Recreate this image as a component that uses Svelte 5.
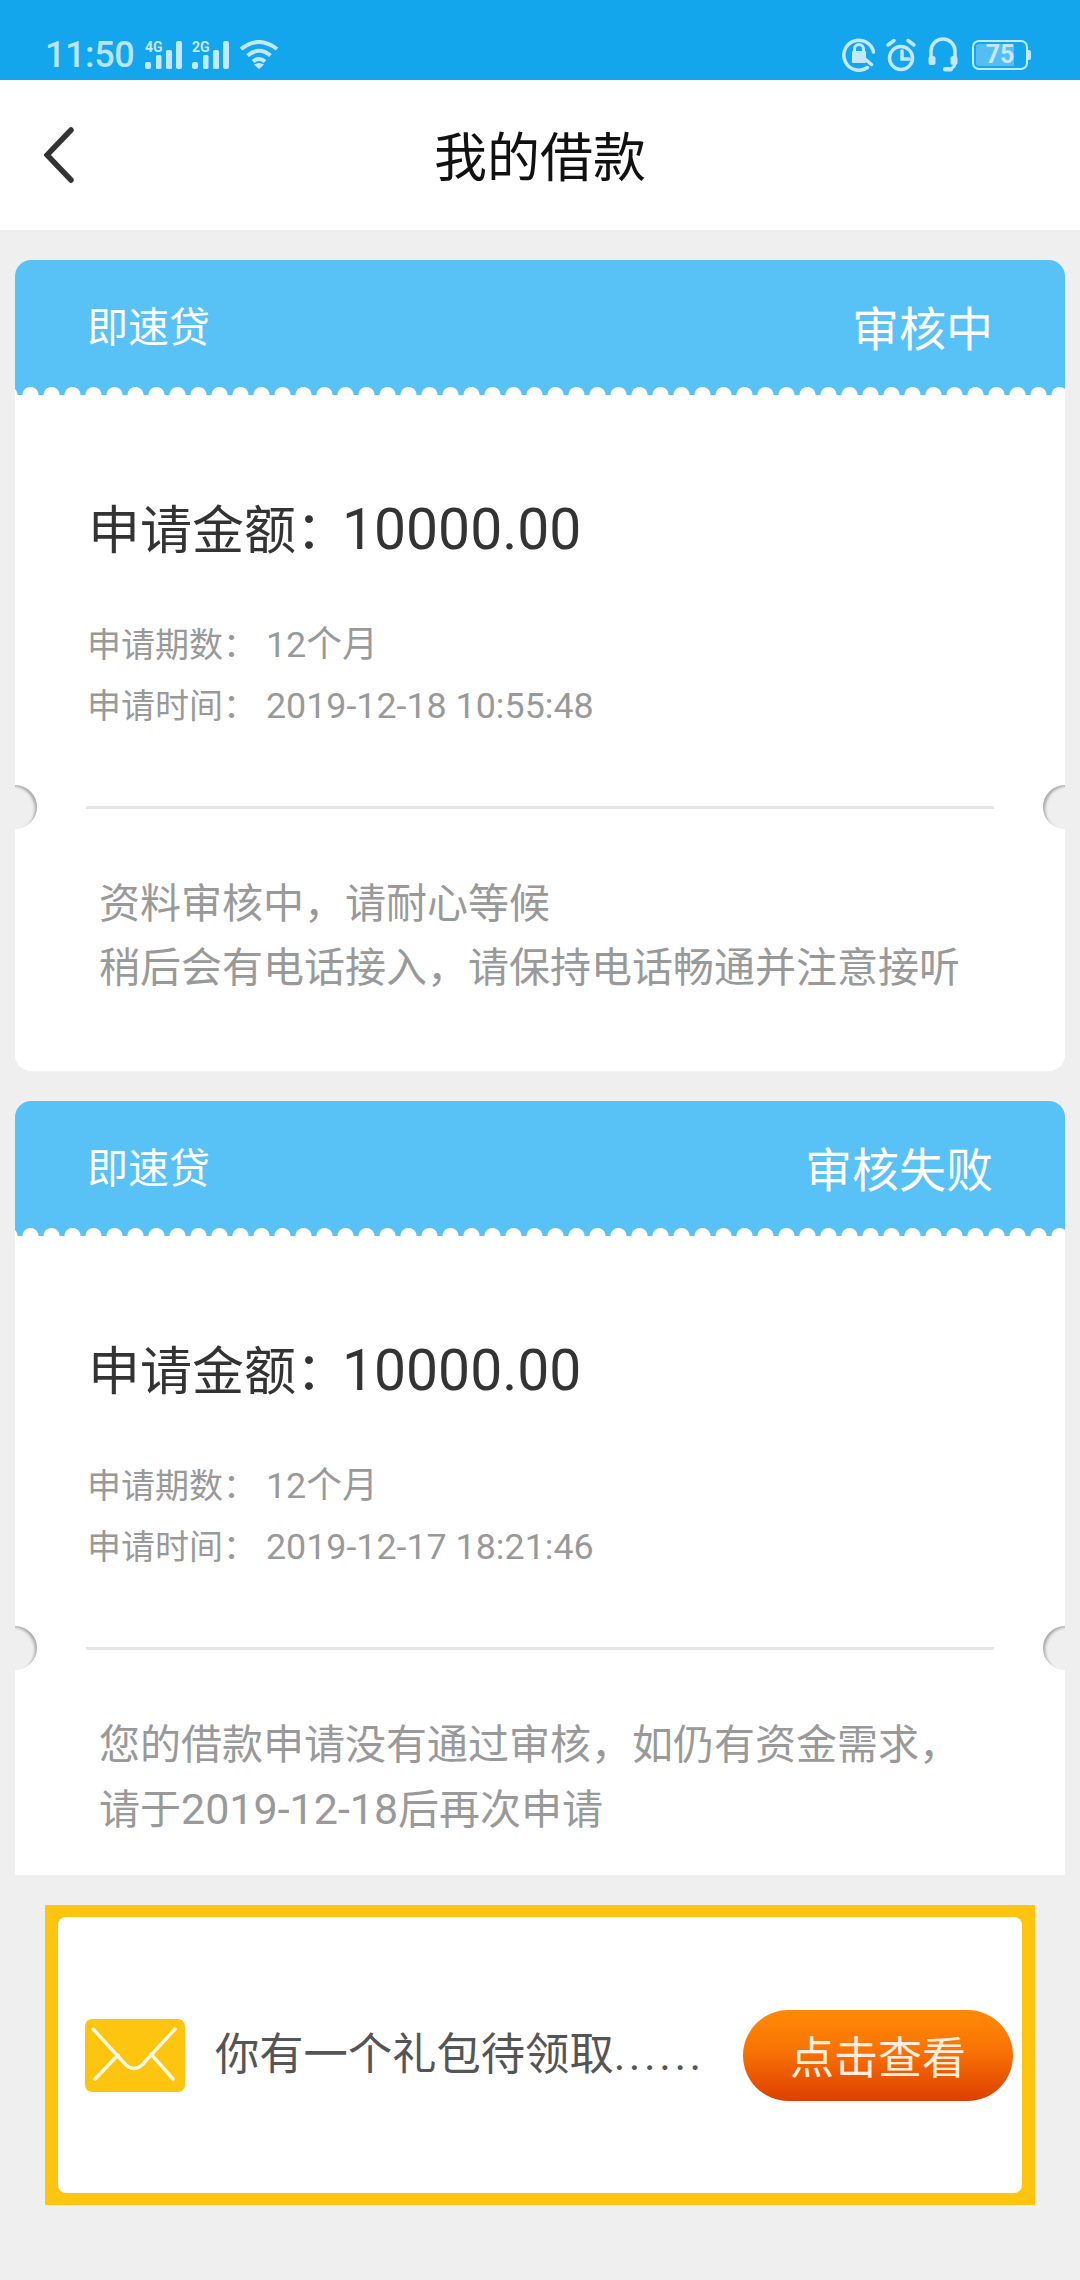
<script>
  const loans = [
    { status: '审核中', date: '2019-12-18 10:55:48', notes: [{ pre: '资料审核中，请耐心等候' }, { pre: '稍后会有电话接入，请保持电话畅通并注意接听' }], clipped: false },
    { status: '审核失败', date: '2019-12-17 18:21:46', notes: [{ pre: '您的借款申请没有通过审核，如仍有资金需求，' }, { pre: '请于', num: '2019-12-18', post: '后再次申请' }], clipped: true }
  ];
</script>

<div class="page">
  <div class="status">
    <div class="status-left">
      <span class="time">11:50</span>
      <svg class="sig" viewBox="0 0 37 30" width="37" height="30">
        <text x="0" y="12" class="net">4G</text>
        <rect x="0" y="22" width="6" height="7" rx="2" /><rect x="11" y="15" width="5.500" height="14" rx="1.500" />
        <rect x="21" y="10" width="6" height="19" rx="1.500" /><rect x="31" y="1" width="6" height="28" rx="2" />
      </svg>
      <svg class="sig" viewBox="0 0 37 30" width="37" height="30">
        <text x="0" y="12" class="net">2G</text>
        <rect x="0" y="22" width="6" height="7" rx="2" /><rect x="11" y="15" width="5.500" height="14" rx="1.500" />
        <rect x="21" y="10" width="6" height="19" rx="1.500" /><rect x="31" y="1" width="6" height="28" rx="2" />
      </svg>
      <svg class="wifi" viewBox="0 0 40 30" width="40" height="30">
        <path d="M2 9 Q20 -5 38 9" /><path d="M8.500 15.500 Q20 6 31.500 15.500" /><path d="M14 21.500 Q20 16.500 26 21.500" />
        <path class="solid" d="M15 24.500 Q20 21.500 25 24.500 L20 29 Z" />
      </svg>
    </div>
    <div class="status-right">
      <svg class="ico" viewBox="0 0 33 34" width="33" height="34">
        <path d="M31.500 14 A15 15 0 1 0 25.500 29.500" class="ln" />
        <path d="M23 21 L29.500 26.500" class="ln" />
        <rect x="10" y="13" width="14" height="12" rx="1" class="fl" />
        <path d="M12.500 13 V11 A4.500 4.500 0 0 1 21.500 11 V13" class="ln thin" />
      </svg>
      <svg class="ico" viewBox="0 0 32 34" width="32" height="34">
        <circle cx="16" cy="20" r="11.500" class="ln" />
        <path d="M17 13 V21 H24" class="ln" />
        <path d="M3 7 L9 2.500 M29 7 L23 2.500" class="ln" />
      </svg>
      <svg class="ico" viewBox="0 0 32 35" width="32" height="35">
        <path d="M4 22 V14 A12 12 0 0 1 28 14 V22" class="ln" />
        <rect x="1.500" y="19" width="7" height="9" rx="2.500" class="fl" />
        <rect x="23.500" y="19" width="7" height="9" rx="2.500" class="fl" />
        <path d="M28 26 Q28 31 22 32" class="ln thin" />
        <rect x="16" y="30" width="10" height="4.500" rx="2.200" class="fl" />
      </svg>
      <div class="battery">
        <div class="cell">
          <span class="pct">75</span>
        </div>
        <div class="nub"></div>
      </div>
    </div>
  </div>

  <header class="nav">
    <svg class="back" viewBox="0 0 30 56" width="30" height="56">
      <path d="M27 3 L3 28 L27 53" />
    </svg>
    <h1>我的借款</h1>
    <span></span>
  </header>

  <main class="list">
    {#each loans as loan}
      <section class="card" class:clipped={loan.clipped}>
        <div class="head">
          <span class="product">即速贷</span>
          <span class="state">{loan.status}</span>
        </div>
        <div class="amount">申请金额：<span class="num">10000.00</span></div>
        <div class="details">
          <div class="row"><span class="label">申请期数：</span><span class="value">12个月</span></div>
          <div class="row"><span class="label">申请时间：</span><span class="value">{loan.date}</span></div>
        </div>
        <div class="sep">
          <i class="notch left"></i>
          <div class="line"></div>
          <i class="notch right"></i>
        </div>
        <div class="notes">
          {#each loan.notes as n}<p>{n.pre}{#if n.num}<span class="digits">{n.num}</span>{n.post}{/if}</p>{/each}
        </div>
      </section>
    {/each}
  </main>

  <aside class="gift">
    <div class="gift-inner">
      <svg class="mail" viewBox="0 0 100 73" width="100" height="73">
        <rect width="100" height="73" rx="7" fill="#fdc50f" />
        <path d="M8 10 L41 46 Q49 53 57 46 L90 10 M10 60 L33 36 M88 60 L66 35" fill="none" stroke="#fff8e0" stroke-width="3.500" stroke-linecap="round" />
      </svg>
      <span class="gift-text">你有一个礼包待领取<span class="dots">......</span></span>
      <button class="cta">点击查看</button>
    </div>
  </aside>
</div>

<style>
  :global(body) { margin: 0; background: #efefef; }
  .page {
    width: 1080px;
    height: 2280px;
    background: #efefef;
    font-family: Roboto, "Noto Sans CJK SC", sans-serif;
    overflow: hidden;
  }
  .status {
    height: 80px;
    background: #14a6ec;
    display: flex;
    justify-content: space-between;
    align-items: flex-end;
    padding: 0 49px 8px 45px;
    box-sizing: border-box;
    color: #b9e4f9;
  }
  .status-left, .status-right { display: flex; align-items: center; }
  .status-left { gap: 10px; }
  .status-right { gap: 10px; }
  .time { font-size: 36px; line-height: 34px; font-weight: 500; letter-spacing: -0.4px; margin-right: 1px; }
  .sig { fill: #c4e8fa; }
  .net { font: 700 14px Roboto, sans-serif; fill: #c4e8fa; }
  .wifi path { fill: none; stroke: #c4e8fa; stroke-width: 4; }
  .wifi path.solid { fill: #c4e8fa; stroke: none; }
  .ln { fill: none; stroke: #c4e8fa; stroke-width: 3.500; stroke-linecap: round; }
  .thin { stroke-width: 3; }
  .fl { fill: #c4e8fa; }
  .battery { display: flex; align-items: center; margin-left: 3px; }
  .cell {
    width: 56px;
    height: 30px;
    box-sizing: border-box;
    border: 2px solid #c4e8fa;
    border-radius: 7px;
    display: flex;
    align-items: center;
    justify-content: center;
    background: linear-gradient(90deg, #54bdf1 0 76%, transparent 76%);
    background-clip: content-box;
    padding: 2px;
  }
  .pct { font-size: 25px; line-height: 24px; font-weight: 700; color: #c4e8fa; }
  .nub { width: 3px; height: 10px; background: #c4e8fa; border-radius: 0 2px 2px 0; }

  .nav {
    height: 150px;
    background: #fff;
    display: grid;
    grid-template-columns: 1fr auto 1fr;
    align-items: center;
    padding: 0 44px;
  }
  h1 { margin: 8px 0 0; font-size: 53px; line-height: 72px; font-weight: 400; color: #111; }
  .back { fill: none; }
  .back path { fill: none; stroke: #333; stroke-width: 5.500; stroke-linecap: round; stroke-linejoin: miter; }

  .list { padding: 30px 15px 0; display: flex; flex-direction: column; gap: 30px; }
  .card {
    background: #fff;
    border-radius: 16px;
    overflow: hidden;
    padding-bottom: 71px;
  }
  .card.clipped { border-radius: 16px 16px 0 0; padding-bottom: 33px; }
  .head {
    height: 135px;
    box-sizing: border-box;
    background: radial-gradient(circle at 50% 100%, #fff 7.500px, transparent 8.500px) 5px bottom / 21px 9px repeat-x, #58c1f5;
    display: flex;
    justify-content: space-between;
    align-items: center;
    padding: 0 72px 0 72px;
    color: #fff;
  }
  .product { font-size: 41px; line-height: 56px; }
  .state { font-size: 47px; line-height: 64px; margin-top: 5px; }
  .amount {
    margin-top: 97px;
    padding-left: 73px;
    font-size: 52px;
    line-height: 76px;
    color: #333;
  }
  .num { font-size: 57px; margin-left: -6px; }
  .details { margin-top: 45px; padding-left: 72px; color: #999; font-size: 34px; line-height: 61px; }
  .row { display: flex; }
  .label { width: 179px; }
  .value { font-size: 35.800px; }
  .sep { position: relative; margin-top: 69px; height: 3px; }
  .line { height: 3px; background: #e5e5e5; margin: 0 71px; }
  .notch {
    position: absolute;
    top: -21px;
    width: 44px;
    height: 44px;
    border-radius: 50%;
    background: #efefef;
  }
  .notch.left { left: -22px; box-shadow: inset -3px 2px 3px -1px rgba(0, 0, 0, 0.3); }
  .notch.right { right: -22px; box-shadow: inset 3px 2px 3px -1px rgba(0, 0, 0, 0.3); }
  .notes { margin-top: 63px; padding-left: 84px; color: #999; font-size: 41px; line-height: 64px; }
  .notes p { margin: 0; white-space: nowrap; }
  .digits { font-size: 43px; }

  .gift {
    margin: 30px 45px 0;
    height: 300px;
    box-sizing: border-box;
    padding: 12px 13px;
    background: #fdc50f;
  }
  .gift-inner {
    height: 100%;
    background: #fff;
    border-radius: 8px;
    display: flex;
    align-items: center;
    padding: 0 9px 0 27px;
  }
  .mail { flex: none; }
  .gift-text { margin-left: 30px; font-size: 44.300px; line-height: 60px; color: #555; white-space: nowrap; }
  .dots { letter-spacing: 3.500px; }
  .cta {
    margin-left: auto;
    width: 270px;
    height: 91px;
    border: 0;
    border-radius: 46px;
    background: linear-gradient(180deg, #ff8a05 0%, #f97206 45%, #dc3f00 100%);
    color: #ffeedd;
    font-family: inherit;
    font-size: 44px;
    padding: 0;
  }
</style>
